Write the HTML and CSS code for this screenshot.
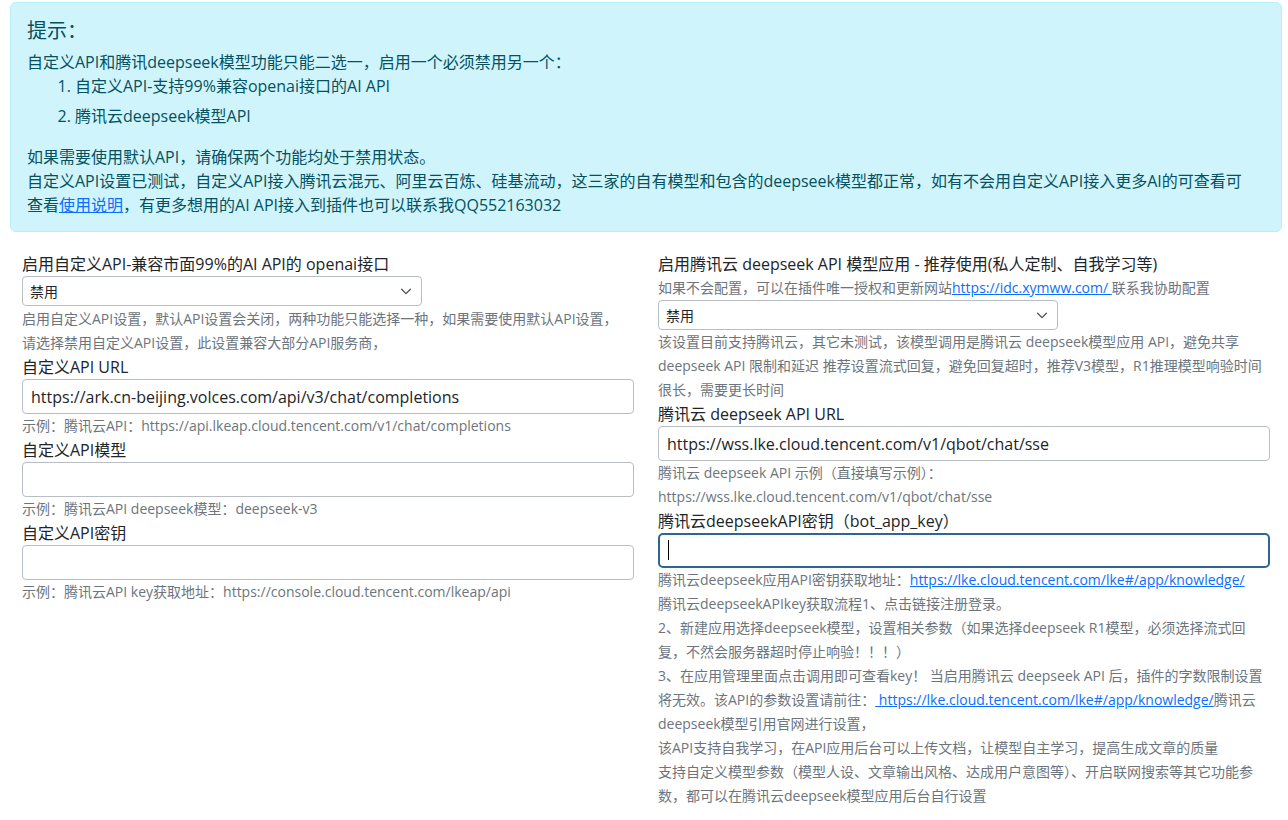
FILE: index.html
```html
<!DOCTYPE html>
<html lang="zh-CN">
<head>
<meta charset="utf-8">
<title>API 设置</title>
<link rel="stylesheet" href="styles.css">
</head>
<body>
<div class="page">
  <div class="alert">
    <h4 class="alert-title">提示：</h4>
    <p class="alert-line">自定义API和腾讯deepseek模型功能只能二选一，启用一个必须禁用另一个：</p>
    <ol class="alert-list">
      <li>自定义API-支持99%兼容openai接口的AI API</li>
      <li>腾讯云deepseek模型API</li>
    </ol>
    <p class="alert-line">如果需要使用默认API，请确保两个功能均处于禁用状态。<br>自定义API设置已测试，自定义API接入腾讯云混元、阿里云百炼、硅基流动，这三家的自有模型和包含的deepseek模型都正常，如有不会用自定义API接入更多AI的可查看可<br>查看<a href="#" class="link">使用说明</a>，有更多想用的AI API接入到插件也可以联系我QQ552163032</p>
  </div>

  <div class="columns">
    <div class="col">
      <label class="label">启用自定义API-兼容市面99%的AI API的 openai接口</label>
      <div class="select-wrap">
        <select class="select"><option>禁用</option></select>
        <svg class="chevron" viewBox="0 0 16 16" width="14" height="14"><path d="M3 6l5 5 5-5" fill="none" stroke="#555" stroke-width="1.6" stroke-linecap="round" stroke-linejoin="round"/></svg>
      </div>
      <div class="help help-after-select">启用自定义API设置，默认API设置会关闭，两种功能只能选择一种，如果需要使用默认API设置，<br>请选择禁用自定义API设置，此设置兼容大部分API服务商，</div>

      <label class="label">自定义API URL</label>
      <input class="input" type="text" value="https://ark.cn-beijing.volces.com/api/v3/chat/completions">
      <div class="help">示例：腾讯云API：https://api.lkeap.cloud.tencent.com/v1/chat/completions</div>

      <label class="label">自定义API模型</label>
      <input class="input" type="text" value="">
      <div class="help">示例：腾讯云API deepseek模型：deepseek-v3</div>

      <label class="label">自定义API密钥</label>
      <input class="input" type="text" value="">
      <div class="help">示例：腾讯云API key获取地址：https://console.cloud.tencent.com/lkeap/api</div>
    </div>

    <div class="col">
      <label class="label">启用腾讯云 deepseek API 模型应用 - 推荐使用(私人定制、自我学习等)</label>
      <div class="help">如果不会配置，可以在插件唯一授权和更新网站<a href="#" class="link">https://idc.xymww.com/ </a>联系我协助配置</div>
      <div class="select-wrap">
        <select class="select"><option>禁用</option></select>
        <svg class="chevron" viewBox="0 0 16 16" width="14" height="14"><path d="M3 6l5 5 5-5" fill="none" stroke="#555" stroke-width="1.6" stroke-linecap="round" stroke-linejoin="round"/></svg>
      </div>
      <div class="help">该设置目前支持腾讯云，其它未测试，该模型调用是腾讯云 deepseek模型应用 API，避免共享<br>deepseek API 限制和延迟 推荐设置流式回复，避免回复超时，推荐V3模型，R1推理模型响验时间<br>很长，需要更长时间</div>

      <label class="label">腾讯云 deepseek API URL</label>
      <input class="input" type="text" value="https://wss.lke.cloud.tencent.com/v1/qbot/chat/sse">
      <div class="help">腾讯云 deepseek API 示例（直接填写示例）：<br>https://wss.lke.cloud.tencent.com/v1/qbot/chat/sse</div>

      <label class="label">腾讯云deepseekAPI密钥（bot_app_key）</label>
      <div class="input-wrap">
        <input class="input input-focus" type="text" value="">
        <span class="caret"></span>
      </div>
      <div class="help">腾讯云deepseek应用API密钥获取地址：<a href="#" class="link">https://lke.cloud.tencent.com/lke#/app/knowledge/</a><br>腾讯云deepseekAPIkey获取流程1、点击链接注册登录。<br>2、新建应用选择deepseek模型，设置相关参数（如果选择deepseek R1模型，必须选择流式回<br>复，不然会服务器超时停止响验！！！）<br>3、在应用管理里面点击调用即可查看key！ 当启用腾讯云 deepseek API 后，插件的字数限制设置<br>将无效。该API的参数设置请前往：<a href="#" class="link"> https://lke.cloud.tencent.com/lke#/app/knowledge/</a>腾讯云<br>deepseek模型引用官网进行设置，<br>该API支持自我学习，在API应用后台可以上传文档，让模型自主学习，提高生成文章的质量<br>支持自定义模型参数（模型人设、文章输出风格、达成用户意图等）、开启联网搜索等其它功能参<br>数，都可以在腾讯云deepseek模型应用后台自行设置</div>
    </div>
  </div>
</div>
</body>
</html>
```

FILE: styles.css
```css
* { box-sizing: border-box; }

html, body {
  margin: 0;
  padding: 0;
  background: #ffffff;
}

body {
  font-family: "Open Sans", "Noto Sans CJK SC", sans-serif;
  font-size: 16px;
  line-height: 24px;
  color: #212529;
}

.page {
  margin: 2px 6px 0 10px;
}

.alert {
  background: #cff4fc;
  border: 1px solid #b6effb;
  border-radius: 6px;
  color: #055160;
  padding: 16px 16px 14px 16px;
}

.alert-title {
  margin: 0 0 7px 0;
  font-size: 20px;
  line-height: 24px;
  font-weight: 400;
}

.alert-line {
  margin: 0;
}

.alert-list {
  margin: 0 0 17px 0;
  padding-left: 48px;
}

.alert-list li + li {
  margin-top: 6px;
}

.link {
  color: #0d6efd;
  text-decoration: underline;
}

.columns {
  display: grid;
  grid-template-columns: 1fr 1fr;
  margin-top: 20px;
}

.col {
  padding: 0 12px;
  display: flex;
  flex-direction: column;
  align-items: flex-start;
}

.label {
  display: block;
  line-height: 24px;
  font-size: 16px;
  color: #212529;
}

.select-wrap {
  position: relative;
  width: 400px;
  height: 30px;
}

.select {
  appearance: none;
  -webkit-appearance: none;
  width: 100%;
  height: 30px;
  border: 1px solid #b9bec4;
  border-radius: 4px;
  background: #ffffff;
  padding: 0 30px 0 7px;
  font-family: inherit;
  font-size: 14px;
  color: #212529;
}

.chevron {
  position: absolute;
  right: 9px;
  top: 8px;
  pointer-events: none;
}

.input-wrap {
  position: relative;
  width: 100%;
}

.input {
  display: block;
  width: 100%;
  height: 35px;
  border: 1px solid #b9bec4;
  border-radius: 4px;
  background: #ffffff;
  padding: 0 8px;
  font-family: inherit;
  font-size: 16px;
  color: #212529;
  outline: none;
}

.input-focus {
  border: 2px solid #2f6592;
  border-radius: 5px;
}

.caret {
  position: absolute;
  left: 10px;
  top: 7px;
  width: 1px;
  height: 20px;
  background: #000000;
}

.help {
  font-size: 14px;
  line-height: 24px;
  color: #6c757d;
}

.help-after-select {
  margin-top: 1px;
}
```
